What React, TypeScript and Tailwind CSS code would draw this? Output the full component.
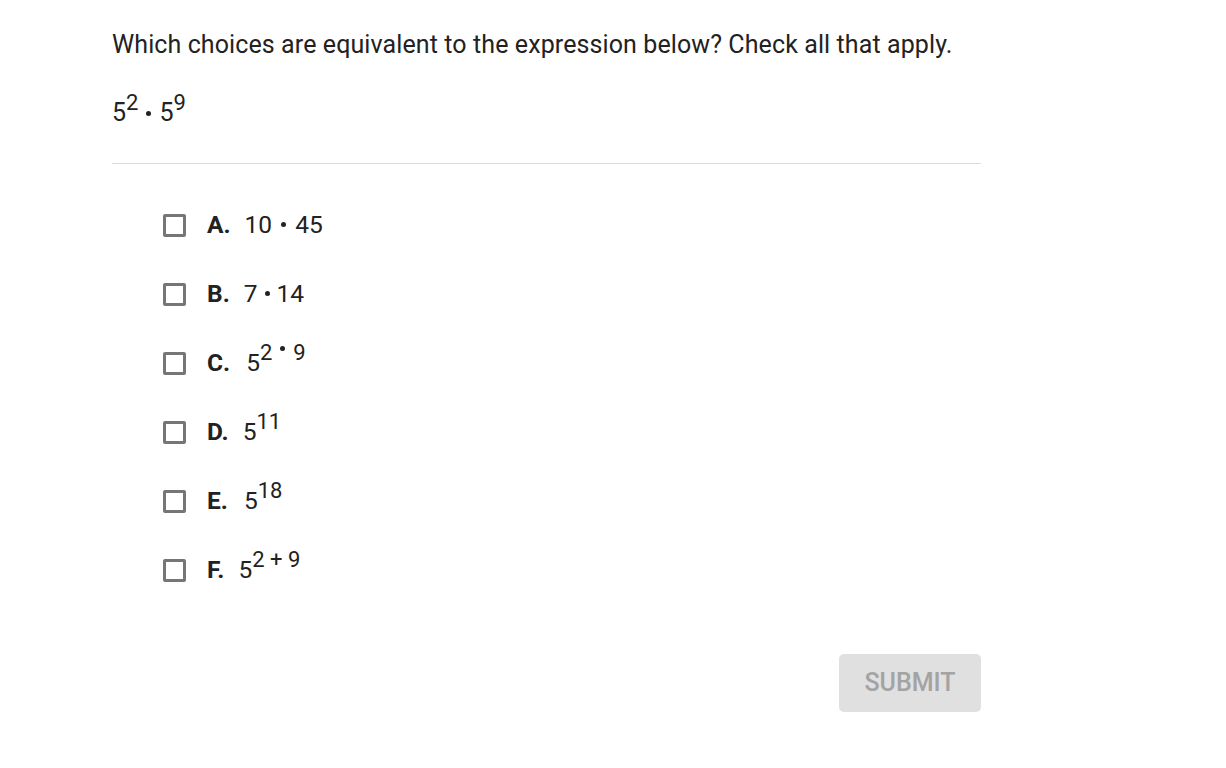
import React from "react";

const Sup = ({ children }: { children: React.ReactNode }) => (
  <span className="relative top-[-11px] text-[22px] leading-none">{children}</span>
);

const Dot = ({ m = "mx-[9px]", t = "top-[-6px]" }: { m?: string; t?: string }) => (
  <span className={`inline-block w-[5px] h-[5px] rounded-full bg-current relative ${m} ${t}`} />
);

const choices: { l: string; c: React.ReactNode; gap: string }[] = [
  { l: "A.", c: <span>10<Dot />45</span>, gap: "ml-[14px]" },
  { l: "B.", c: <span>7<Dot m="mx-[7px]" />14</span>, gap: "ml-[14px]" },
  { l: "C.", c: <span>5<Sup>2<Dot m="mx-[8px]" t="top-[-9px]" />9</Sup></span>, gap: "ml-[16px]" },
  { l: "D.", c: <span>5<Sup>11</Sup></span>, gap: "ml-[14px]" },
  { l: "E.", c: <span>5<Sup>18</Sup></span>, gap: "ml-[16px]" },
  { l: "F.", c: <span>5<Sup>2 + 9</Sup></span>, gap: "ml-[14px]" },
];

export default function App() {
  return (
    <div className="w-[1226px] h-[768px] bg-white text-[#222] font-['Roboto',sans-serif]">
      <div className="pl-[112px] w-[981px] pt-[30px]">
        <div className="text-[25px] tracking-[0.1px] leading-[30px] whitespace-nowrap">
          Which choices are equivalent to the expression below? Check all that apply.
        </div>
        <div className="mt-[38px] text-[25px] leading-[30px]">
          5<Sup>2</Sup>
          <Dot m="mx-[8px]" t="top-[-5px]" />5<Sup>9</Sup>
        </div>
        <div className="mt-[35px] border-t border-[#dcdcdc]" />
        <div className="pl-[51px] pt-[46px] flex flex-col gap-[39px]">
          {choices.map((ch) => (
            <div key={ch.l} className="flex items-center h-[30px]">
              <div className="w-[23px] h-[23px] border-[3px] border-[#767676] rounded-[2px]" />
              <span className="ml-[21px] text-[24.5px] font-bold">{ch.l}</span>
              <span className={`${ch.gap} text-[24.5px]`}>{ch.c}</span>
            </div>
          ))}
        </div>
        <div className="flex justify-end mt-[69px]">
          <button className="w-[142px] h-[58px] bg-[#e0e0e0] rounded-[5px] text-[#a3a3a3] text-[25px] font-medium">
            SUBMIT
          </button>
        </div>
      </div>
    </div>
  );
}
